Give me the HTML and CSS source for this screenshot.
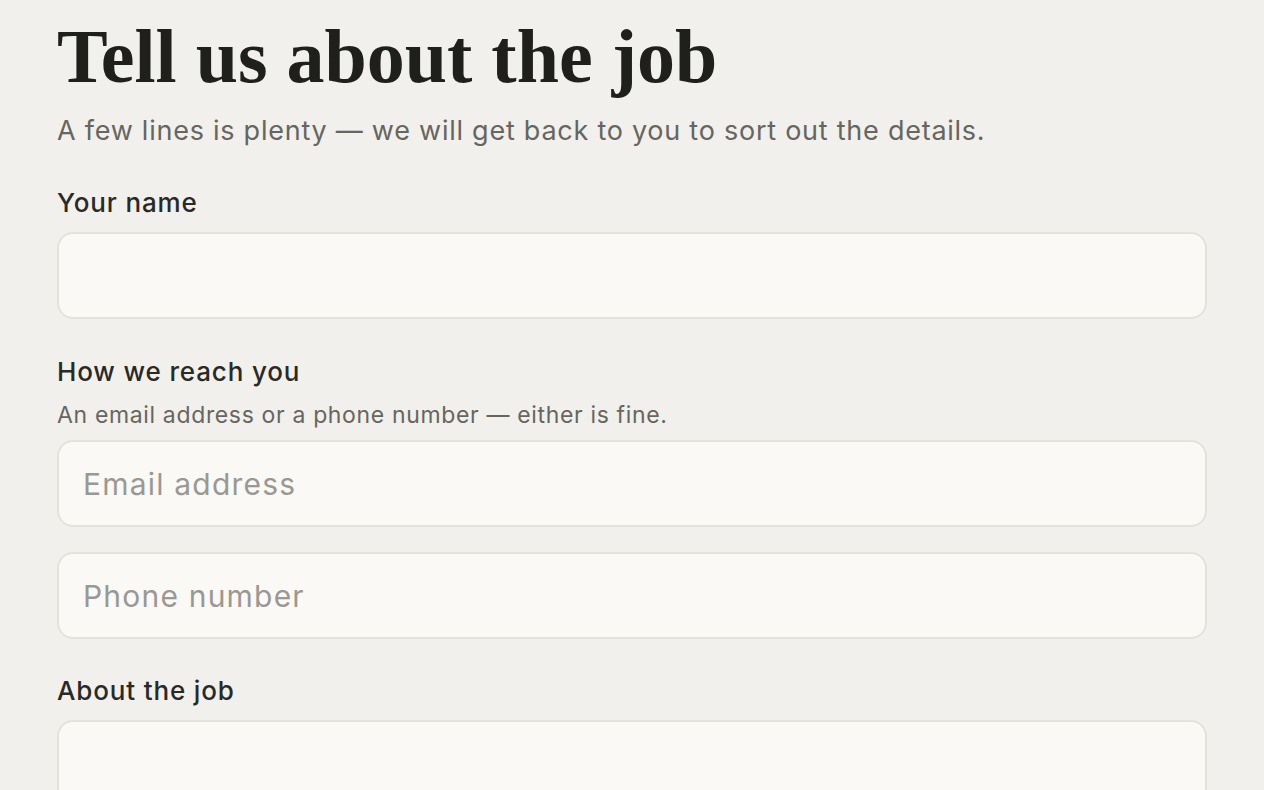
FILE: index.html
```html
<!DOCTYPE html>
<html lang="en">

<head>
    <meta charset="UTF-8">
    <meta name="viewport" content="width=device-width, initial-scale=1.0">
    <title>Tell us about the job</title>
    <link rel="stylesheet" href="styles.css">
</head>

<body>
    <main class="page">
        <h1 class="title">Tell us about the job</h1>
        <p class="lede">A few lines is plenty — we will get back to you to sort out the details.</p>

        <form class="job_form">
            <div class="field">
                <label class="label" for="name">Your name</label>
                <input class="input" type="text" name="name" id="name" />
            </div>

            <div class="field">
                <label class="label" for="email">How we reach you</label>
                <p class="hint">An email address or a phone number — either is fine.</p>
                <input class="input" type="email" name="email" id="email" placeholder="Email address" />
                <input class="input" type="tel" name="phone" id="phone" placeholder="Phone number" />
            </div>

            <div class="field">
                <label class="label" for="about">About the job</label>
                <textarea class="input textarea" name="about" id="about"></textarea>
            </div>
        </form>
    </main>
</body>

</html>
```

FILE: styles.css
```css
* {
    box-sizing: border-box;
}

body {
    margin: 0;
    background: #f1f0ec;
    color: #22211d;
    font-family: Inter, "Noto Sans", sans-serif;
}

.page {
    padding: 12px 57px 40px;
}

.title {
    margin: 0;
    font-family: "Liberation Serif", serif;
    font-weight: 700;
    font-size: 76px;
    line-height: 88px;
    color: #1f1f1b;
}

.lede {
    margin: 13px 0 0;
    font-size: 27px;
    line-height: 36px;
    letter-spacing: 0.75px;
    color: #67655f;
}

.job_form {
    display: flex;
    flex-direction: column;
    gap: 36px;
    margin-top: 37px;
}

.job_form > .field:last-child {
    margin-top: -1px;
}

.field {
    display: flex;
    flex-direction: column;
}

.label {
    font-size: 26px;
    line-height: 34px;
    font-weight: 500;
    letter-spacing: 0.85px;
    color: #2a2925;
    margin-bottom: 12px;
}

.hint {
    margin: -1px 0 10px;
    font-size: 23px;
    line-height: 30px;
    letter-spacing: 0.65px;
    color: #67655f;
}

.input {
    width: 100%;
    height: 87px;
    padding: 0 24px;
    border: 2px solid #e4e2db;
    border-radius: 16px;
    background: #faf9f5;
    font-family: inherit;
    font-size: 30px;
    letter-spacing: 1.2px;
    color: #22211d;
    outline: none;
}

.input + .input {
    margin-top: 25px;
}

.input::placeholder {
    color: #9a9893;
}

.textarea {
    height: 160px;
    resize: none;
}
```
